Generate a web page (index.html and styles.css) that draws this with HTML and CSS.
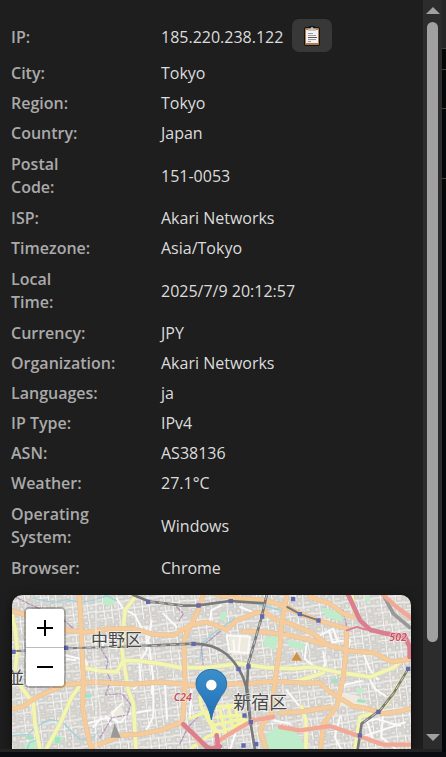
FILE: index.html
```html
<!DOCTYPE html>
<html lang="en">
<head>
<meta charset="utf-8">
<title>IP information</title>
<link rel="stylesheet" href="styles.css">
</head>
<body>
<div class="popup">
  <main class="content">
    <table class="info">
      <tbody>
        <tr class="ip-row"><th scope="row">IP:</th><td><div class="ip"><span>185.220.238.122</span>
          <button class="copy" type="button" aria-label="Copy IP">
            <svg viewBox="0 0 16 20" width="16" height="20" aria-hidden="true">
              <rect x="0" y="1" width="16" height="19" rx="2" fill="#151310"/>
              <rect x="5" y="0" width="6" height="3" rx="1" fill="#151310"/>
              <rect x="1" y="2" width="14" height="17" rx="1" fill="#ad7b4f"/>
              <rect x="2" y="4" width="12" height="13" fill="#f1f1f3"/>
              <path d="M4 5V3h2.500q0-2 1.500-2t1.500 2H12v2z" fill="#c4c1bf"/>
              <path d="M4 7.500h5M4 9.500h8M4 13.500h8M4 15.500h3" stroke="#999" fill="none"/>
              <path d="M4 11.500h9" stroke="#555" fill="none"/>
            </svg>
          </button></div></td></tr>
        <tr><th scope="row">City:</th><td>Tokyo</td></tr>
        <tr><th scope="row">Region:</th><td>Tokyo</td></tr>
        <tr><th scope="row">Country:</th><td>Japan</td></tr>
        <tr class="tall"><th scope="row">Postal<br>Code:</th><td>151-0053</td></tr>
        <tr><th scope="row">ISP:</th><td>Akari Networks</td></tr>
        <tr><th scope="row">Timezone:</th><td>Asia/Tokyo</td></tr>
        <tr class="tall"><th scope="row">Local<br>Time:</th><td>2025/7/9 20:12:57</td></tr>
        <tr><th scope="row">Currency:</th><td>JPY</td></tr>
        <tr><th scope="row">Organization:</th><td>Akari Networks</td></tr>
        <tr><th scope="row">Languages:</th><td>ja</td></tr>
        <tr><th scope="row">IP Type:</th><td>IPv4</td></tr>
        <tr><th scope="row">ASN:</th><td>AS38136</td></tr>
        <tr><th scope="row">Weather:</th><td>27.1°C</td></tr>
        <tr class="tall"><th scope="row">Operating<br>System:</th><td>Windows</td></tr>
        <tr><th scope="row">Browser:</th><td>Chrome</td></tr>
      </tbody>
    </table>

    <div class="map">
      <svg class="tiles" viewBox="36 44 1197 470" role="img" aria-label="Map of Shinjuku">
        <defs>
          <pattern id="blocks" width="92" height="84" patternUnits="userSpaceOnUse" patternTransform="rotate(-7)">
            <rect width="92" height="84" fill="#d8d7d4"/>
            <path d="M4 5h15v10H4zM25 6h13v15H25zM49 4h11v12H49zM68 6h19v10H68zM6 28h12v14H6zM26 31h17v11H26zM52 26h11v16H52zM70 27h16v12H70zM4 53h17v10H4zM27 52h11v15H27zM48 53h16v10H48zM71 50h13v16H71zM7 71h11v9H7zM26 73h16v7H26zM51 70h13v10H51zM71 73h16v7H71z" fill="#e9e5df" stroke="#bdbbb8" stroke-width="2"/>
            <path d="M0 22h44l4 2h44M0 46h64l8-2h20M22 0v46l2 38M46 24v60M66 0v46l2 38M0 68h46" fill="none" stroke="#f7f7f6" stroke-width="3"/>
          </pattern>
          <filter id="soften"><feGaussianBlur stdDeviation="1"/></filter>
          <linearGradient id="pin" x1="0" y1="0" x2="0" y2="1"><stop offset="0" stop-color="#3d8fcb"/><stop offset="1" stop-color="#1f6fb5"/></linearGradient>
          <path id="yellow-roads" d="M36 100l10 50 6 60-6 56M60 315l40 55 5 60 15 78M240 315l-25 35-35 80-42 78M250 262l50 10 50 3 20-35 50 2 60 8 60 12h80l100-12 80 12 80 3 60-5 70 15 70 10 30 5 70-28 20-17M410 44l-35 46-10 110 5 40 15 90 15 40 8 138M1225 265l-65 105-30 25-50 15-15 98M1055 44l6 40 20 36M900 300l70-22M905 380l13 40v88"/>
          <path id="orange-roads" d="M238 44l6 106 6 150-2 80q8 60 27 128M36 92l42 12 122 46 60 6 70-11h70l60 17 60 3 50-30 50-10 40 15 20 8 30-28 60-23 25-2 25 20 50 15 70 30 45 35 70 17 70 6 50 27 65-10M36 385l30-5 44-30 85-37 85-8 120 7 80-7 70 7 50 6 80-6 60-2 80-7 90 5h50l30 27 70 43 30 4 60 18 50-7 95-28M840 398l60-3 90-15M610 44l-20 56-35 70-3 30 3 110-5 90-5 30 35 30 20 30M275 500l55-20 30-15 60-3 60-12 65-25M860 50l-15 80-5 70-15 100-10 100-25 30-10 20 20 58M1040 150l-2 65-8 75-20 90-40 50-8 78M650 44l80 11 60 4 80 22M730 155l40-2 100 12 60 14 40 14M840 75l60 24 55 22 85 24M930 50l60 20 40 30 30 10"/>
        </defs>
        <g filter="url(#soften)" fill="none" stroke-linejoin="round" stroke-linecap="round">
          <rect x="30" y="40" width="1210" height="480" fill="#dedcd8"/>
          <rect x="30" y="40" width="1210" height="480" fill="url(#blocks)"/>
          <path d="M685 165l60-5 5 60-55 5zM1010 335l60 10 35 30-20 15-70-15zM330 395l35-15 10 25-30 20z" fill="#eeeade"/>
          <g fill="#bfeccb">
            <path d="M840 442l38 8 22 20 20 44h-80zM795 514l8-56 30-20 30 10v66zM795 170l40-5-10 45-35-15z"/>
            <path d="M310 50h30l6 16-14 12-24-6zM150 460l40 10-10 22-34-8zM660 96h20l-2 26-18-4zM860 180l50 8 4 20-46-8zM960 80l60 16 10 30-50-15zM1095 50l16-2-2 14-16 2zM1070 322h20v16h-20zM70 490l50-8 6 20-50 6z"/>
          </g>
          <path d="M255 340h20v12h-20zM1074 355l22 4-2 10-24-4zM80 465l24 5-8 9-20-4zM995 295h18v12h-18zM600 490h12v10h-12zM925 180l12-2v12h-12zM165 470h16v18h-16z" fill="#a3e3c4"/>
          <g stroke="#9fd2da" stroke-width="4">
            <path d="M100 54l60 12 40-8 40 8 40-6 40-14 30 16"/>
            <path d="M36 466l50-4 24-24 40-20 36 6 24 24 30 30 40-6 14-18M80 508l10-22 30-10"/>
            <path d="M600 240l6-50 40-36 60-40M720 60l40 8 90 24"/>
          </g>
          <g stroke="#fafafa" stroke-width="6">
            <path d="M350 54l18 30 36 20 22 40M440 140v70l-22 36 4 60-20 20M262 430l60-18 40 14 20-24 70-12M280 440l24-28M318 408l14 26M350 426l-14-28 30-28M196 225l60 14 4 26M200 236l26 4M300 155l10 45 40 4"/>
            <path d="M455 120l-10 60 14 110-4 50M460 318v90l-20 40M495 315l6 100M490 100l40 40M630 130l4-40 30-15M680 165l70 4-6 50-56-6zM700 180l4 34M720 170l-4 44M575 330l-6 80M690 508l20-60M870 430l-50-10"/>
            <path d="M920 190l-6 46 26 20 8 30M970 215l6 40-20 20M960 165l40-20 12 36M986 150l12 36 50-8M1050 180l-6 30M1090 218l20 50 24 30M1105 290l20 36 30 20M1024 316l60-14M1020 410l-16 60 20 38M1070 430l60-14 70 20M1100 420l20 60M1150 390l-6 80 40 34M1085 470l130-44M860 330l40 50M720 80l50 20"/>
          </g>
          <path d="M50 52l40 20 100 46 40 36 60-2M300 200l24 40-6 30 14 30-16 44 50-4 26 32-10 32-46 8-36 60M530 80l20 20-12 20M610 260l-6-60 60-50M980 70l50 20 12 60M540 490l24-50 30-30" stroke="#a583b5" stroke-width="4" stroke-dasharray="14 6 4 6" opacity=".75"/>
          <use href="#yellow-roads" stroke="#dcdca0" stroke-width="14"/>
          <use href="#yellow-roads" stroke="#f3f5b4" stroke-width="11"/>
          <path d="M570 508l50-38 80-30 40-20M570 414l50-20 30 60 6 34M600 350l4 30 40 75M650 410l80-6M640 435l90-20M660 390l16 66M684 372l14 68M706 376l10 60M650 380l60-6" stroke="#f2f5a3" stroke-width="10"/>
          <use href="#orange-roads" stroke="#e2c096" stroke-width="15"/>
          <use href="#orange-roads" stroke="#f6cc9c" stroke-width="12"/>
          <g stroke="#7a7a7a" stroke-width="8">
            <path d="M400 44l50 20 60 7 40 5 45-1 95-13 105 7M420 197l160-7q60 0 100 32 44 40 58 96l12 100 15 90M800 44l-15 66-20 70-20 70-4 68 10 100M1225 265l-45 75-40 50-55 40-12 78"/>
            <path d="M36 213l164-9 220-6M862 80l40 22 54 18" stroke-width="6"/>
            <path d="M1150 44l30 56 50 42" stroke="#999" stroke-width="11"/>
          </g>
          <path d="M36 213l164-9 220-6 160-8M800 44l-15 66-20 70-20 70M1225 265l-45 75-40 50-55 40M450 64l60 7 40 5" stroke="#c9c9c9" stroke-width="3" stroke-dasharray="14 14"/>
          <path d="M648 490l16-14 56-34 40-22 60-10M840 440l60 10 90-13 80 28 80 28h85M1150 44l40 36 44 34" stroke="#f2a894" stroke-width="13"/>
          <path d="M550 432l35 33 35 35 20 8M620 508l40-10M650 465l6 43M1045 44l35 76 30 28 50 12 55 8 14 32v30" stroke="#db7f90" stroke-width="14"/>
          <path d="M1040 150l30-10 30 8" stroke="#db7f90" stroke-width="6"/>
          <path d="M344 428l18 44h-30z" fill="#999"/>
          <path d="M890 215l16 26h-32z" fill="#cf9347"/>
          <path d="M438 58h13v13h-13zM192 196h13v13h-13zM36 208h11v13H36zM589 69h13v13h-13zM686 56h13v13h-13zM780 102h13v13h-13zM574 184h13v13h-13zM709 260h13v13h-13zM739 252h13v13h-13zM727 399h13v13h-13zM746 419h13v13h-13zM762 485h13v13h-13zM724 489h13v13h-13zM873 50h13v13h-13zM893 95h13v13h-13zM949 114h13v13h-13zM1218 259h13v13h-13zM1129 388h13v13h-13zM1073 459h13v13h-13z" fill="#6469ae"/>
          <path d="M288 44v470" stroke="#fff" stroke-width="2"/>
        </g>
        <g class="place">
          <text x="273" y="198" font-size="51">中野区</text>
          <text x="22" y="310" font-size="51">並</text>
          <text x="700" y="387" font-size="54">新宿区</text>
        </g>
        <g class="route"><text x="521" y="361">C24</text><text x="1168" y="181">502</text></g>
        <path d="M634 418c-4-24-12-42-24-62-13-20-22-28-22-47a46 42 0 0 1 92 0c0 19-9 27-22 47-12 20-20 38-24 62z" fill="url(#pin)" stroke="#2b6da4" stroke-width="3"/>
        <circle cx="634" cy="314" r="17" fill="#fff" stroke="#2b6da4" stroke-width="2"/>
      </svg>
      <div class="zoom">
        <button type="button" aria-label="Zoom in"><svg viewBox="0 0 16 16" aria-hidden="true"><path d="M0 8h16M8 0v16"/></svg></button>
        <button type="button" aria-label="Zoom out"><svg viewBox="0 0 16 16" aria-hidden="true"><path d="M0 8h16"/></svg></button>
      </div>
    </div>
  </main>
  <div class="scrollbar" aria-hidden="true">
    <svg viewBox="0 0 14 7" width="14" height="7"><path d="M7 0l7 7H0z"/></svg>
    <div class="track"><div class="thumb"></div></div>
    <svg viewBox="0 0 14 7" width="14" height="7"><path d="M0 0h14L7 7z"/></svg>
  </div>
</div>
<div class="backdrop" aria-hidden="true"><i></i><i></i><i></i><i></i></div>
</body>
</html>
```
FILE: styles.css
```css
* { box-sizing: border-box; }

body {
  margin: 0;
  height: 100vh;
  display: grid;
  grid-template-columns: 1fr 4px;
  padding-bottom: 5px;
  overflow: hidden;
  background: #0a0c12;
  color: #dcdcdc;
  font: 16px/23px "Open Sans", "Noto Sans", sans-serif;
}

.popup {
  display: flex;
  min-height: 0;
  background: #1e1e1e;
  border-bottom: 3px solid #232323;
}

.content {
  flex: 1;
  min-width: 0;
  display: flex;
  flex-direction: column;
  padding: 15px 12px 0;
  overflow: hidden;
}

.info {
  width: 100%;
  border-collapse: collapse;
  margin-bottom: 12px;
  margin-left: -1px;
}

.info th,
.info td {
  padding: 4px 0 3px;
  text-align: left;
  vertical-align: middle;
}

.info th {
  width: 150px;
  font-weight: 600;
  color: #aaa;
}

.info .tall th { padding: 5px 0 4px; }
.info .ip-row th { padding: 8px 0 6px; }
.info .ip-row td { padding: 4px 0 6px; }

.ip {
  display: flex;
  align-items: center;
  gap: 9px;
}

.ip span { padding-top: 3px; }

.copy {
  width: 40px;
  height: 33px;
  display: grid;
  place-items: center;
  padding: 0;
  border: 0;
  border-radius: 7px;
  background: #383838;
}

.map {
  position: relative;
  flex: 1;
  min-height: 0;
  overflow: hidden;
  border-radius: 10px 10px 0 0;
  box-shadow: 0 3px 12px rgba(0, 0, 0, .6);
}

.tiles {
  display: block;
  width: 100%;
  height: auto;
}

.place {
  font-family: "Noto Sans CJK JP", sans-serif;
  fill: #484848;
  stroke: #fff;
  stroke-opacity: .6;
  stroke-width: 5px;
  paint-order: stroke;
}

.route {
  font: italic 600 32px "Noto Sans", sans-serif;
  fill: #c94d58;
  stroke: #fff;
  stroke-opacity: .6;
  stroke-width: 4px;
  paint-order: stroke;
}

.zoom {
  position: absolute;
  top: 12px;
  left: 12px;
  border: 2px solid rgba(0, 0, 0, .25);
  border-radius: 5px;
  background-clip: padding-box;
}

.zoom button {
  width: 38px;
  height: 38px;
  display: grid;
  place-items: center;
  padding: 0;
  border: 0;
  border-radius: 0 0 3px 3px;
  background: #fff;
}

.zoom button:first-child {
  height: 39px;
  border-bottom: 1px solid #bbb;
  border-radius: 3px 3px 0 0;
}

.zoom svg {
  width: 16px;
  height: 16px;
  fill: none;
  stroke: #000;
  stroke-width: 2;
}

.scrollbar {
  width: 19px;
  display: flex;
  flex-direction: column;
  align-items: center;
  gap: 8px;
  padding: 7px 0 8px;
  background: #2c2c2c;
}

.scrollbar svg { fill: #a0a0a0; }

.track {
  flex: 1;
  width: 11px;
}

.thumb {
  height: 88%;
  border-radius: 6px;
  background: #a0a0a0;
}

.backdrop {
  padding-top: 48px;
  background: linear-gradient(#262626 48px, #050608 48px);
}

.backdrop i {
  display: block;
  height: 70px;
  border-top: 1px solid #444;
}

.backdrop i:first-child { height: 21px; }
.backdrop i:nth-child(2) { height: 39px; }
.backdrop i:last-child { height: 0; }
```
